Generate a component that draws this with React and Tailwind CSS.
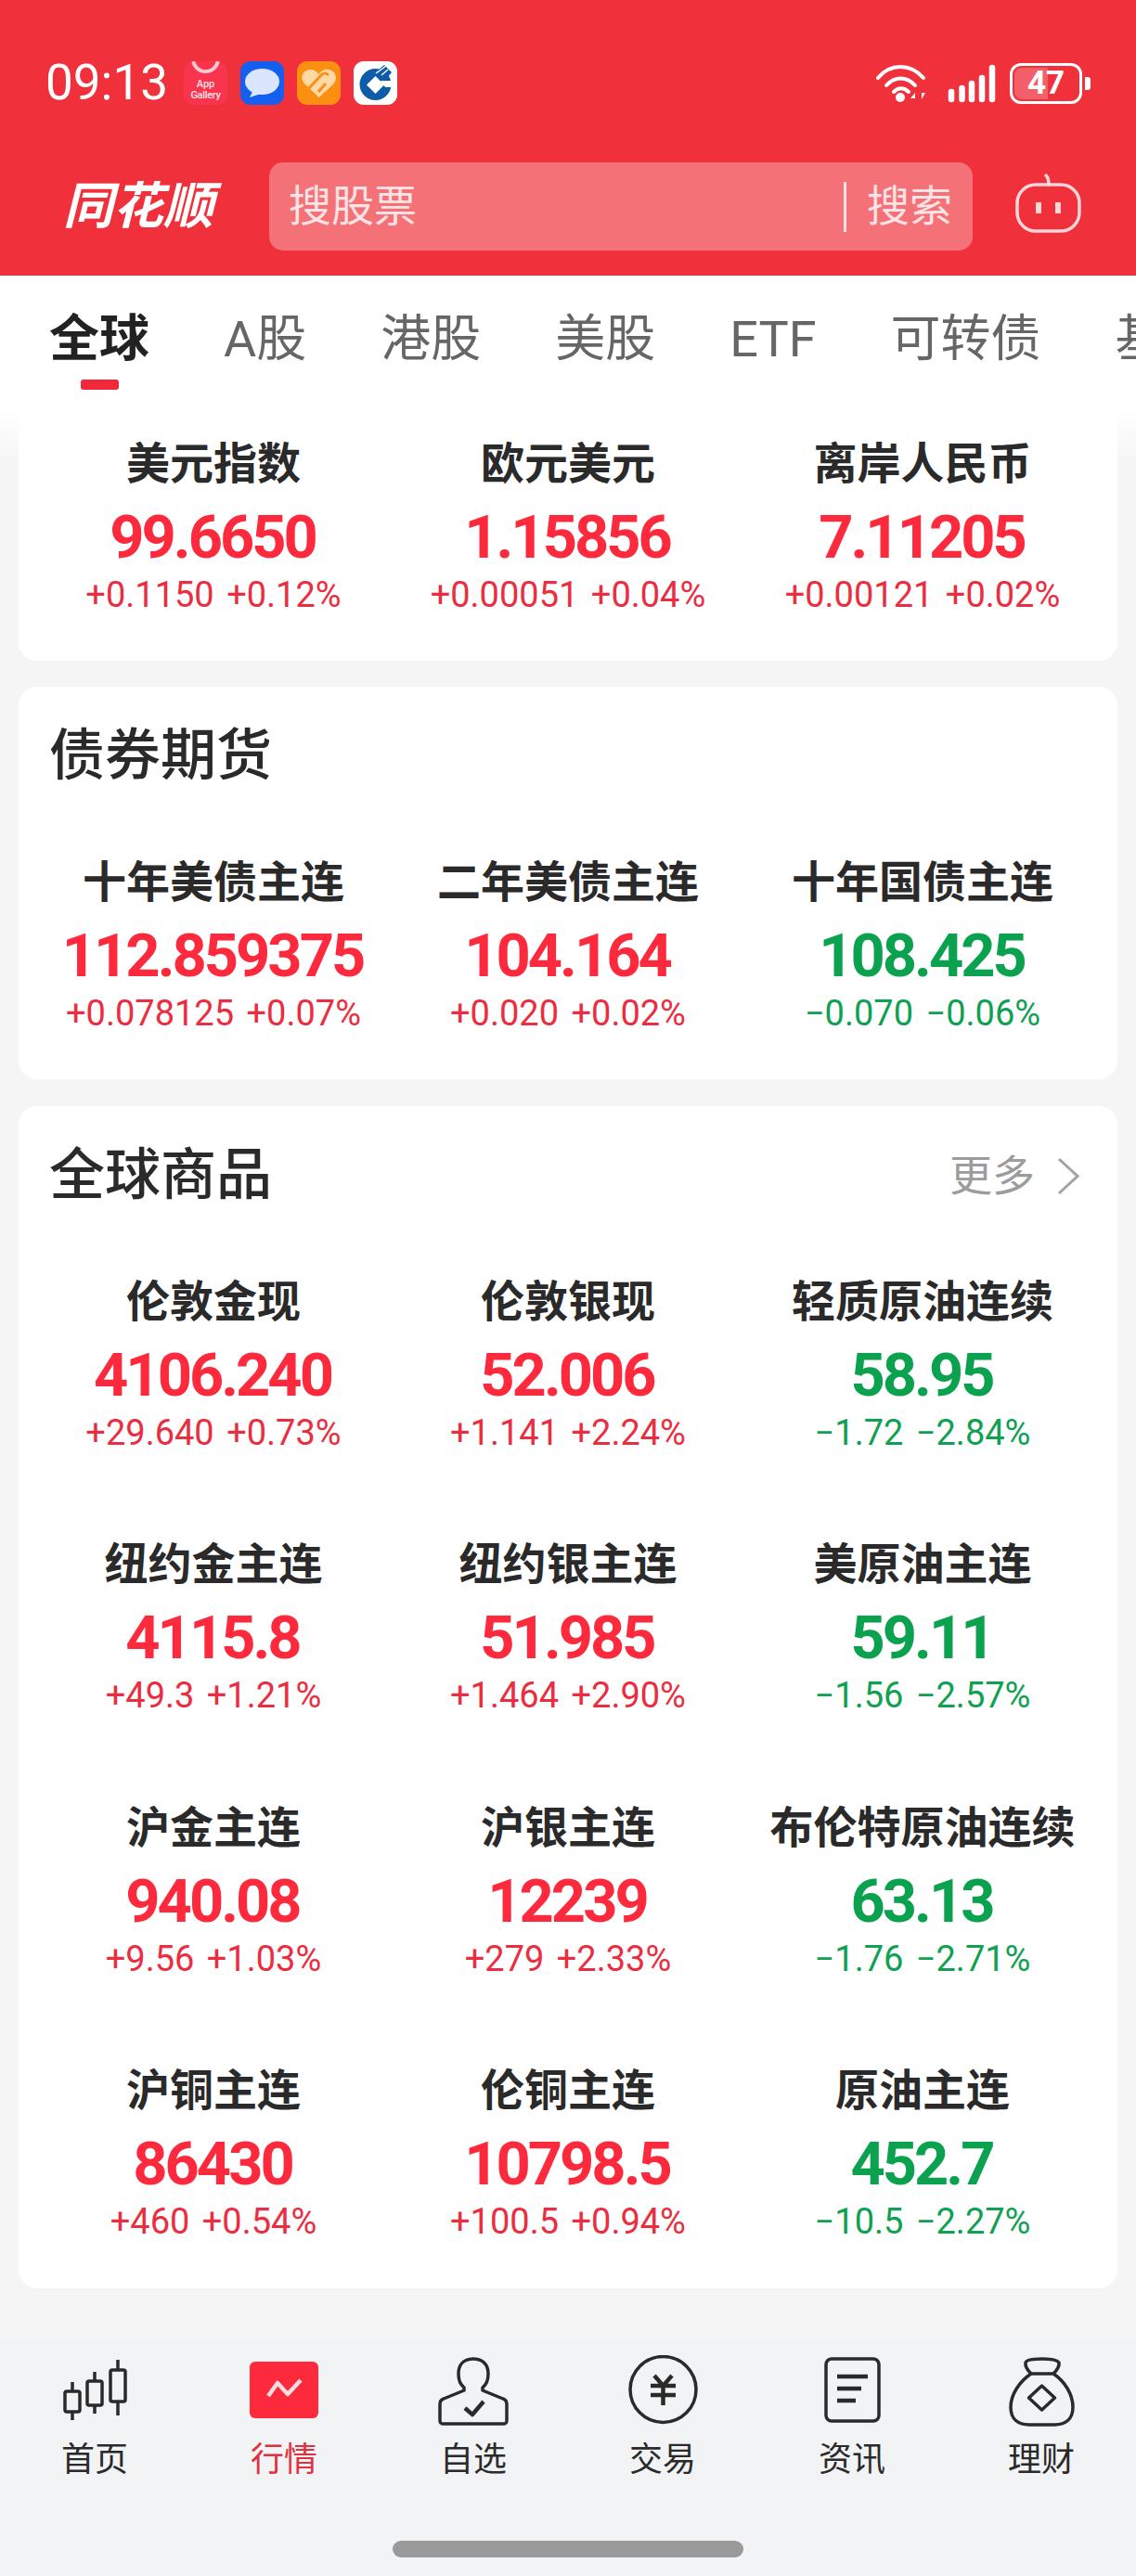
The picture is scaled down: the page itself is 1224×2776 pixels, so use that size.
import React from 'react';

const tabs = ['全球', 'A股', '港股', '美股', 'ETF', '可转债', '基金'];

const forex = [
  { name: '美元指数', value: '99.6650', change: '+0.1150 +0.12%', up: true },
  { name: '欧元美元', value: '1.15856', change: '+0.00051 +0.04%', up: true },
  { name: '离岸人民币', value: '7.11205', change: '+0.00121 +0.02%', up: true },
];

const bonds = [
  { name: '十年美债主连', value: '112.859375', change: '+0.078125 +0.07%', up: true },
  { name: '二年美债主连', value: '104.164', change: '+0.020 +0.02%', up: true },
  { name: '十年国债主连', value: '108.425', change: '−0.070 −0.06%', up: false },
];

const commodities = [
  { name: '伦敦金现', value: '4106.240', change: '+29.640 +0.73%', up: true },
  { name: '伦敦银现', value: '52.006', change: '+1.141 +2.24%', up: true },
  { name: '轻质原油连续', value: '58.95', change: '−1.72 −2.84%', up: false },
  { name: '纽约金主连', value: '4115.8', change: '+49.3 +1.21%', up: true },
  { name: '纽约银主连', value: '51.985', change: '+1.464 +2.90%', up: true },
  { name: '美原油主连', value: '59.11', change: '−1.56 −2.57%', up: false },
  { name: '沪金主连', value: '940.08', change: '+9.56 +1.03%', up: true },
  { name: '沪银主连', value: '12239', change: '+279 +2.33%', up: true },
  { name: '布伦特原油连续', value: '63.13', change: '−1.76 −2.71%', up: false },
  { name: '沪铜主连', value: '86430', change: '+460 +0.54%', up: true },
  { name: '伦铜主连', value: '10798.5', change: '+100.5 +0.94%', up: true },
  { name: '原油主连', value: '452.7', change: '−10.5 −2.27%', up: false },
];

const QuoteGrid = ({ items }) => (
  <div className="grid grid-cols-3 gap-y-[91.4px] px-[19px]">
    {items.map((item) => (
      <div key={item.name} className="flex flex-col items-center">
        <div className="h-[60px] text-[47px] leading-[60px] font-bold text-[#2a2a2a] whitespace-nowrap">{item.name}</div>
        <div className={`mt-[9px] mr-[2px] h-[80px] text-[65px] leading-[80px] font-bold tracking-[-3px] ${item.up ? 'text-[#fc2a3c]' : 'text-[#0ba24f]'}`}>
          {item.value}
        </div>
        <div className={`h-[42px] mt-[1px] text-[38px] leading-[42px] [word-spacing:4px] whitespace-nowrap ${item.up ? 'text-[#ea2d40]' : 'text-[#10a052]'}`}>
          {item.change}
        </div>
      </div>
    ))}
  </div>
);

const AppIcons = () => (
  <div className="flex gap-[14px]">
    <div className="relative w-[47px] h-[47px] rounded-[11px] overflow-hidden bg-[#f9344f] flex flex-col items-center justify-end pb-[5px]">
      <div className="absolute top-[-8px] left-[8px] w-[31px] h-[21px] rounded-b-[16px] border-[4px] border-[#ffc8cf]" />
      <span className="text-[11px] leading-[12px] font-medium text-[#ffe3e6]">App</span>
      <span className="text-[11px] leading-[11px] font-medium tracking-[-0.3px] text-[#ffe3e6]">Gallery</span>
    </div>
    <div className="w-[47px] h-[47px] rounded-[11px] overflow-hidden bg-[#145ff0]">
      <svg viewBox="0 0 47 47" className="w-full h-full" fill="#dbe5fd">
        <ellipse cx="23.500" cy="22" rx="18.500" ry="14" />
        <path d="M14 31 10 39l12-4Z" />
      </svg>
    </div>
    <div className="w-[47px] h-[47px] rounded-[11px] overflow-hidden bg-[#fb8f12]">
      <svg viewBox="0 0 47 47" className="w-full h-full">
        <path d="M23.500 39 8 24C2 17 7 9 15 9c4 0 6 2 8.500 5 2.500-4 6.500-6 10.500-5 7 1 11 9 5 16Z" fill="#ffd8a6" />
        <path d="M13 29 26 15c3-3 6-2 8 0M23 33l8-9" stroke="#fb8f12" strokeWidth="3" fill="none" />
      </svg>
    </div>
    <div className="w-[47px] h-[47px] rounded-[11px] overflow-hidden bg-white">
      <svg viewBox="0 0 47 47" className="w-full h-full">
        <circle cx="23.500" cy="25" r="17" fill="#0e5ba8" />
        <path d="M23.500 16 33 25.500 23.500 35 14 25.500Z" fill="#fff" />
        <path d="M29 21h15v7H34Z" fill="#fff" />
        <path d="M27 9l6-5 8 8-5 6Z" fill="#0e5ba8" />
        <path d="M24 13 35 5M30 15l7-6" stroke="#fff" strokeWidth="1.500" fill="none" />
      </svg>
    </div>
  </div>
);

const StatusIcons = () => (
  <div className="flex items-center">
    <svg width="54" height="42" viewBox="0 0 54 42" fill="none" stroke="#fff" strokeWidth="4" strokeLinecap="round">
      <path d="M2 15C15 -1 37 -1 51 15" />
      <path d="M11 23c9-10 22-10 31 0" />
      <path d="M19 30c5-5 11-5 16 0" />
      <circle cx="26" cy="36" r="5" fill="#fff" stroke="none" />
      <path d="M42 31l-5 6h5Zm7 0v7l4-7Z" fill="#fff" stroke="none" />
    </svg>
    <svg width="52" height="42" viewBox="0 0 52 42" className="ml-[23px]" fill="none" stroke="#fff" strokeWidth="6.500" strokeLinecap="round">
      <path d="M4 30v8M15.500 26v12M26 21v17M37 15v23" />
      <path d="M48 4v34" />
    </svg>
    <div className="relative ml-[15px] w-[78px] h-[44px] rounded-[12px] border-[3px] border-white overflow-hidden flex items-center justify-center">
      <div className="absolute left-[2px] top-[2px] bottom-[2px] w-[36px] rounded-l-[8px] bg-[#f4606a]" />
      <span className="relative text-[35px] leading-[38px] font-bold text-white">47</span>
    </div>
    <div className="ml-[3px] w-[6px] h-[14px] rounded-r-[3px] bg-white" />
  </div>
);

const Robot = () => (
  <svg width="71" height="64" viewBox="0 0 71 64" fill="none" stroke="#ffd5d7" strokeWidth="3.500">
    <path d="M33 2c2 2 3 5 3 10" strokeLinecap="round" />
    <rect x="2" y="12" width="67" height="50" rx="20" />
    <path d="M25 31v12M46 31v12" strokeWidth="6" />
  </svg>
);

const navIcons = {
  home: (
    <g>
      <path d="M16 29v10M16 61v9M40 18v10M40 54v9M65 5v11M65 50v15" />
      <rect x="8" y="39" width="16" height="22" rx="2" />
      <rect x="32" y="28" width="16" height="26" rx="2" />
      <rect x="57" y="16" width="16" height="34" rx="2" />
    </g>
  ),
  market: (
    <g>
      <rect x="3" y="7" width="74" height="61" rx="6" fill="#fc2a3c" stroke="none" />
      <path d="M23 44 33 30 44 42 58 27" stroke="#fbdde0" strokeWidth="4.500" />
    </g>
  ),
  watch: (
    <g>
      <path d="M40 4C30 4 24 10 24 20c0 8 2 11 6 15v3L8 47c-3 1-4 3-4 6v17c0 3 1 4 4 4h64c3 0 4-1 4-4V53c0-3-1-5-4-6L50 38v-3c4-4 6-7 6-15C56 10 50 4 40 4Z" />
      <path d="M31 57l8 7 12-14" strokeWidth="4.500" />
    </g>
  ),
  trade: (
    <g>
      <circle cx="40.500" cy="37" r="35.500" />
      <path d="M31 22l9.500 11L50 22M27 33h27M27 43h27M40.500 33v21" strokeWidth="4.500" />
    </g>
  ),
  news: (
    <g>
      <rect x="12" y="4" width="57" height="67" rx="6" />
      <path d="M24 23h33M24 36h26M24 49h20" strokeWidth="4.500" />
    </g>
  ),
  wealth: (
    <g>
      <path d="M29 20C26 17 22 13 23 8c1-3 8-4 18-4s16 1 18 4c1 5-3 9-6 12" />
      <path d="M29 20h24c12 8 21 22 21 36 0 14-9 19-20 19H27C16 75 7 70 7 56c0-14 10-28 22-36Z" />
      <path d="M40.500 33l14 13-14 13-14-13Z" />
    </g>
  ),
};

const navItems = [
  { key: 'home', label: '首页' },
  { key: 'market', label: '行情', active: true },
  { key: 'watch', label: '自选' },
  { key: 'trade', label: '交易' },
  { key: 'news', label: '资讯' },
  { key: 'wealth', label: '理财' },
];

export default function App() {
  return (
    <div className="w-[1224px] h-[2776px] overflow-hidden flex flex-col bg-[#f5f5f5] font-['Roboto','Noto_Sans_CJK_SC',sans-serif]">
      {/* Red header */}
      <header className="h-[297px] shrink-0 bg-[#f0313b] pt-[66px]">
        <div className="h-[47px] flex items-center justify-between pl-[49px] pr-[49px]">
          <div className="flex items-center gap-[17px]">
            <span className="text-[53px] leading-[47px] text-white">09:13</span>
            <AppIcons />
          </div>
          <StatusIcons />
        </div>
        <div className="mt-[62px] flex items-center pl-[68px]">
          <div className="w-[222px] text-[54px] leading-[60px] font-bold italic text-white">同花顺</div>
          <div className="w-[758px] h-[95px] rounded-[15px] bg-[#f57178] flex items-center justify-between pl-[21px] pr-[22px] text-[46px] text-[#fde3e4]">
            <span>搜股票</span>
            <div className="flex items-center gap-[22px]">
              <div className="w-[3px] h-[54px] bg-[#fde3e4]" />
              <span>搜索</span>
            </div>
          </div>
          <div className="ml-[46px] mt-[-8px]">
            <Robot />
          </div>
        </div>
      </header>

      {/* Market tabs */}
      <nav className="h-[143px] shrink-0 bg-white flex gap-[80px] pl-[53px] pt-[39px] overflow-hidden">
        {tabs.map((tab, i) => (
          <div key={tab} className="relative shrink-0 h-[60px]">
            <span className={`text-[54px] leading-[60px] whitespace-nowrap ${i === 0 ? 'font-bold text-[#222222]' : 'text-[#666666]'}`}>
              {tab}
            </span>
            {i === 0 && <div className="absolute left-[34px] top-[73px] w-[41px] h-[11px] rounded-[3px] bg-[#f0283a]" />}
          </div>
        ))}
      </nav>

      <main className="flex-1 min-h-0">
        <div className="h-[300px] px-[20px] bg-linear-to-b from-white to-[#f5f5f5] to-20%">
          <section className="h-[272px] bg-white rounded-b-[20px] pt-[30px]">
            <QuoteGrid items={forex} />
          </section>
        </div>

        <div className="px-[20px] flex flex-col gap-[29px]">
          <section className="h-[423px] bg-white rounded-[20px]">
            <div className="h-[150px] mb-[31px] pl-[33px] flex items-center text-[60px] font-medium text-[#2a2a2a]">债券期货</div>
            <QuoteGrid items={bonds} />
          </section>

          <section className="h-[1274px] bg-white rounded-[20px]">
            <div className="h-[150px] mb-[31px] pl-[33px] pr-[41px] flex items-center justify-between">
              <span className="text-[60px] font-medium text-[#2a2a2a]">全球商品</span>
              <div className="flex items-center gap-[24px] text-[46px] text-[#9c9c9c]">
                <span>更多</span>
                <svg width="24" height="41" viewBox="0 0 24 41" fill="none" stroke="#a3a3a3" strokeWidth="3">
                  <path d="M2 2l20 18.500L2 39" />
                </svg>
              </div>
            </div>
            <QuoteGrid items={commodities} />
          </section>
        </div>
      </main>

      {/* Bottom navigation */}
      <footer className="h-[256px] shrink-0 bg-[#f2f3f5] flex flex-col items-center pt-[18px]">
        <div className="w-full grid grid-cols-6">
          {navItems.map((item) => (
            <div key={item.key} className="flex flex-col items-center">
              <svg width="80" height="80" viewBox="0 0 80 80" fill="none" stroke="#2a2a2a" strokeWidth="3.500" strokeLinejoin="round">
                {navIcons[item.key]}
              </svg>
              <span className={`mt-[9px] text-[36px] leading-[48px] ${item.active ? 'text-[#e0303f]' : 'text-[#2a2a2a]'}`}>{item.label}</span>
            </div>
          ))}
        </div>
        <div className="mt-[63px] w-[378px] h-[18px] rounded-full bg-[#9a9a9a]" />
      </footer>
    </div>
  );
}
